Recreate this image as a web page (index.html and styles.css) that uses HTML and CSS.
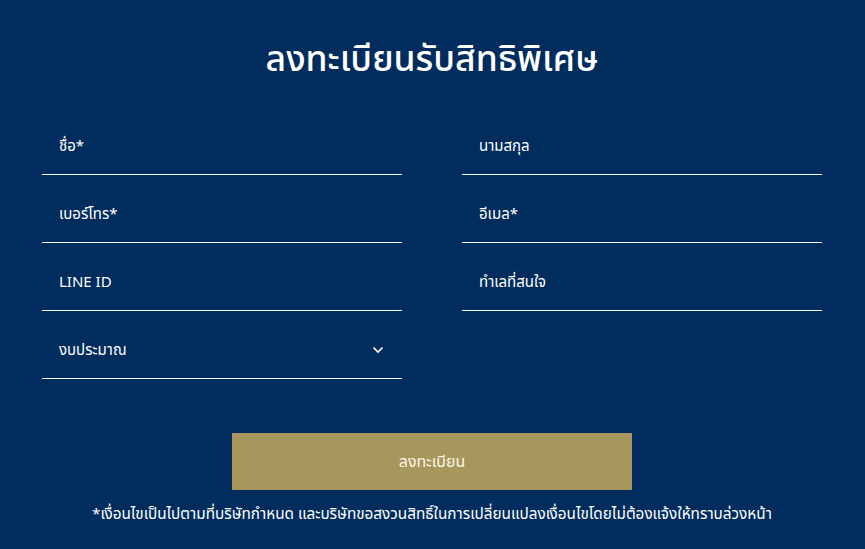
FILE: index.html
```html
<!DOCTYPE html>
<html lang="th">
<head>
    <meta charset="UTF-8">
    <meta name="viewport" content="width=device-width, initial-scale=1.0">
    <title>ลงทะเบียนรับสิทธิพิเศษ</title>
    <link rel="stylesheet" href="styles.css">
</head>
<body>
    <section class="register">
        <h1 class="register-title">ลงทะเบียนรับสิทธิพิเศษ</h1>
        <form class="register-form">
            <div class="field-grid">
                <label class="field"><input type="text" placeholder="ชื่อ*"></label>
                <label class="field"><input type="text" placeholder="นามสกุล"></label>
                <label class="field"><input type="tel" placeholder="เบอร์โทร*"></label>
                <label class="field"><input type="email" placeholder="อีเมล*"></label>
                <label class="field"><input type="text" placeholder="LINE ID"></label>
                <label class="field"><input type="text" placeholder="ทำเลที่สนใจ"></label>
                <label class="field field-select">
                    <select>
                        <option>งบประมาณ</option>
                    </select>
                    <svg class="chevron" width="12" height="8" viewBox="0 0 12 8">
                        <path d="M1.5 1.5 L6 6 L10.5 1.5" fill="none" stroke="#fff" stroke-width="1.6"/>
                    </svg>
                </label>
            </div>
            <button type="button" class="submit-btn">ลงทะเบียน</button>
            <p class="note">*เงื่อนไขเป็นไปตามที่บริษัทกำหนด และบริษัทขอสงวนสิทธิ์ในการเปลี่ยนแปลงเงื่อนไขโดยไม่ต้องแจ้งให้ทราบล่วงหน้า</p>
        </form>
    </section>
</body>
</html>
```

FILE: styles.css
```css
body {
    margin: 0;
    padding: 0;
    background-color: #002d5d;
    font-family: "Noto Sans Thai", "Noto Sans", "Liberation Sans", sans-serif;
    color: #fff;
}
.register {
    width: 780px;
    margin: 0 0 0 42px;
    padding-top: 35px;
}
.register-title {
    margin: 0;
    text-align: center;
    font-size: 35.5px;
    font-weight: 500;
    line-height: 50px;
}
.field-grid {
    display: grid;
    grid-template-columns: 360px 360px;
    column-gap: 60px;
    row-gap: 11px;
    margin-top: 33px;
}
.field {
    position: relative;
    display: block;
    border-bottom: 1px solid #fff;
    height: 56px;
}
.field input,
.field select {
    width: 100%;
    height: 56px;
    box-sizing: border-box;
    padding: 0 17px;
    background: transparent;
    border: none;
    outline: none;
    color: #fff;
    font-family: inherit;
    font-size: 15px;
    appearance: none;
}
.field input::placeholder {
    color: #fff;
    opacity: 1;
}
.chevron {
    position: absolute;
    right: 18px;
    top: 24px;
    pointer-events: none;
}
.submit-btn {
    display: block;
    width: 400px;
    height: 57px;
    margin: 54px auto 0;
    background-color: #a8975d;
    border: none;
    color: #fbf6e6;
    font-family: inherit;
    font-size: 16px;
    cursor: pointer;
}
.note {
    margin: 13px -20px 0;
    text-align: center;
    font-size: 15.3px;
}
```
